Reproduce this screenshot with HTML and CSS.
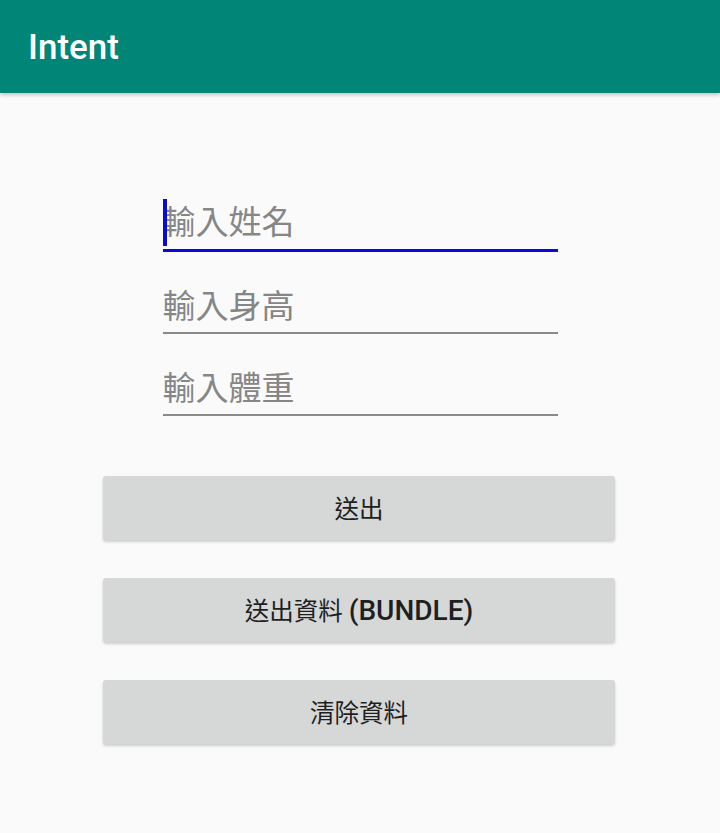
FILE: index.html
```html
<!DOCTYPE html>
<html lang="zh-Hant">
<head>
<meta charset="utf-8">
<title>Intent</title>
<link rel="stylesheet" href="styles.css">
</head>
<body>
<header class="appbar">
  <h1 class="title">Intent</h1>
</header>
<main class="content">
  <div class="fields">
    <div class="field focused"><span class="caret"></span><span class="placeholder">輸入姓名</span></div>
    <div class="field"><span class="placeholder">輸入身高</span></div>
    <div class="field"><span class="placeholder">輸入體重</span></div>
  </div>
  <div class="buttons">
    <button class="btn">送出</button>
    <button class="btn">送出資料 <span class="latin">(BUNDLE)</span></button>
    <button class="btn">清除資料</button>
  </div>
</main>
</body>
</html>
```
FILE: styles.css
```css
html, body {
  margin: 0;
  padding: 0;
}
body {
  width: 720px;
  height: 833px;
  background: #fafafa;
  font-family: Roboto, "Noto Sans CJK TC", sans-serif;
  overflow: hidden;
}
.appbar {
  height: 93px;
  background: #008577;
  display: flex;
  align-items: center;
  padding-left: 28px;
  box-shadow: 0 2px 4px rgba(0, 0, 0, 0.22);
  position: relative;
  z-index: 1;
}
.title {
  margin: 0;
  color: #ffffff;
  font-family: Roboto, sans-serif;
  font-weight: 500;
  font-size: 35px;
  line-height: 1;
  margin-top: 1px;
}
.content {
  display: flex;
  flex-direction: column;
  align-items: center;
  padding-top: 103px;
}
.fields {
  width: 395px;
  display: flex;
  flex-direction: column;
  gap: 28px;
}
.field {
  position: relative;
  height: 48px;
  padding-bottom: 4px;
  border-bottom: 2px solid #8a8a8a;
  font-family: "Noto Sans CJK TC", sans-serif;
  font-size: 33px;
  line-height: 48px;
}
.field.focused {
  padding-bottom: 5px;
  border-bottom: 3px solid #0a0ad6;
}
.placeholder {
  color: #868686;
}
.caret {
  position: absolute;
  left: 0;
  top: 3px;
  width: 4px;
  height: 47px;
  background: #0a0ad6;
}
.buttons {
  margin-top: 60px;
  display: flex;
  flex-direction: column;
  gap: 38px;
  width: 512px;
  margin-right: 2px;
}
.btn {
  height: 64px;
  border: none;
  border-radius: 3px;
  background: #d6d7d7;
  box-shadow: 0 2px 3px rgba(0, 0, 0, 0.18);
  color: #1f1f1f;
  font-family: Roboto, "Noto Sans CJK TC", sans-serif;
  font-size: 24.5px;
  font-weight: 400;
  padding: 0;
  padding-bottom: 2px;
}
.latin {
  font-weight: 500;
  font-size: 28px;
}
```
